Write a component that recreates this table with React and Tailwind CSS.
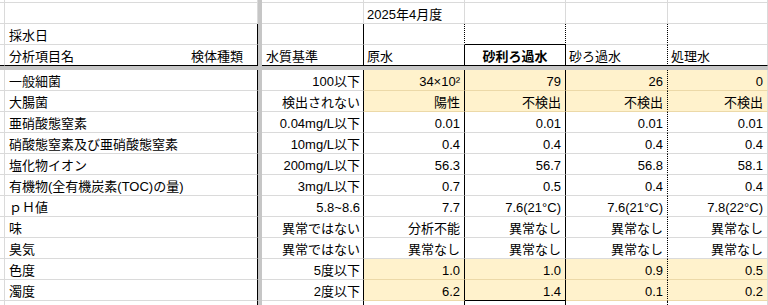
const R = {
  gray: 'border-r border-r-[#dadada]',
  black: 'border-r border-r-black',
  dot: 'border-r border-r-black [border-right-style:dotted]',
  none: '',
};
const B = {
  gray: 'border-b border-b-[#dadada]',
  black: 'border-b border-b-black',
  tan: 'border-b border-b-[#ecd9a8]',
  none: '',
};

// column widths (incl. right border): gutter, item, freeze bar, 基準, 原水, 砂利, 砂, 処理
const W = ['w-[5px]', 'w-[253px]', 'w-[4px]', 'w-[102px]', 'w-[101px]', 'w-[101px]', 'w-[102px]', 'w-[100px]'];

const BODY = [
  { name: '一般細菌', std: '100以下', v: ['34×10²', '79', '26', '0'], hl: true },
  { name: '大腸菌', std: '検出されない', v: ['陽性', '不検出', '不検出', '不検出'], hl: true },
  { name: '亜硝酸態窒素', std: '0.04mg/L以下', v: ['0.01', '0.01', '0.01', '0.01'] },
  { name: '硝酸態窒素及び亜硝酸態窒素', std: '10mg/L以下', v: ['0.4', '0.4', '0.4', '0.4'] },
  { name: '塩化物イオン', std: '200mg/L以下', v: ['56.3', '56.7', '56.8', '58.1'] },
  { name: '有機物(全有機炭素(TOC)の量)', std: '3mg/L以下', v: ['0.7', '0.5', '0.4', '0.4'] },
  { name: 'ｐＨ値', std: '5.8~8.6', v: ['7.7', '7.6(21°C)', '7.6(21°C)', '7.8(22°C)'] },
  { name: '味', std: '異常ではない', v: ['分析不能', '異常なし', '異常なし', '異常なし'] },
  { name: '臭気', std: '異常ではない', v: ['異常なし', '異常なし', '異常なし', '異常なし'] },
  { name: '色度', std: '5度以下', v: ['1.0', '1.0', '0.9', '0.5'], hl: true },
  { name: '濁度', std: '2度以下', v: ['6.2', '1.4', '0.1', '0.2'], hl: true },
];

function Cell({ w, r = 'gray', b = 'gray', className = '', children }) {
  return (
    <div className={`${w} h-full shrink-0 box-border flex items-end overflow-hidden whitespace-nowrap ${R[r]} ${B[b]} ${className}`}>
      {children}
    </div>
  );
}

function Bar() {
  return <div className="w-[4px] h-full shrink-0 bg-[#c6c6c6]" />;
}

export default function App() {
  return (
    <div className="w-[768px] h-[305px] overflow-hidden bg-white text-black text-[13px] leading-none font-['Liberation_Sans','Noto_Sans_CJK_JP',sans-serif]">
      {/* top sliver */}
      <div className="flex h-[3px]">
        <Cell w={W[0]} />
        <Cell w={W[1]} />
        <Bar />
        <Cell w={W[3]} />
        <Cell w={W[4]} />
        <Cell w={W[5]} />
        <Cell w={W[6]} />
        <Cell w={W[7]} />
      </div>

      {/* 2025年4月度 */}
      <div className="flex h-[21px]">
        <Cell w={W[0]} />
        <Cell w={W[1]} />
        <Bar />
        <Cell w={W[3]} />
        <Cell w={W[4]} className="pl-[3px] pb-[2px] overflow-visible">2025年4月度</Cell>
        <Cell w={W[5]} />
        <Cell w={W[6]} />
        <Cell w={W[7]} />
      </div>

      {/* 採水日 */}
      <div className="flex h-[21px]">
        <Cell w={W[0]} />
        <Cell w={W[1]} r="black" className="pl-[4px] pb-[2px]">採水日</Cell>
        <Bar />
        <Cell w={W[3]} r="black" />
        <Cell w={W[4]} r="dot" />
        <Cell w={W[5]} r="dot" b="black" />
        <Cell w={W[6]} r="dot" />
        <Cell w={W[7]} />
      </div>

      {/* 分析項目名 */}
      <div className="flex h-[21px]">
        <Cell w={W[0]} b="black" />
        <Cell w={W[1]} r="black" b="black" className="justify-between pl-[4px] pr-[14px] pb-[2px]">
          <span>分析項目名</span>
          <span>検体種類</span>
        </Cell>
        <Bar />
        <Cell w={W[3]} r="black" b="black" className="pl-[4px] pb-[2px]">水質基準</Cell>
        <Cell w={W[4]} r="black" b="black" className="pl-[3px] pb-[2px]">原水</Cell>
        <Cell w={W[5]} r="black" b="black" className="justify-center pb-[2px] font-bold">砂利ろ過水</Cell>
        <Cell w={W[6]} r="dot" b="black" className="pl-[3px] pb-[2px]">砂ろ過水</Cell>
        <Cell w={W[7]} b="black" className="pl-[3px] pb-[2px]">処理水</Cell>
      </div>

      {/* frozen pane divider */}
      <div className="h-[4px] bg-[#c6c6c6]" />

      {BODY.map((row, i) => {
        const last = i === BODY.length - 1;
        const bg = row.hl ? 'bg-[#fff2cc]' : '';
        const vb = row.hl ? 'tan' : 'gray';
        return (
          <div key={row.name} className="flex h-[21px]">
            <Cell w={W[0]} />
            <Cell w={W[1]} r="black" className="pl-[4px] pb-[2px]">{row.name}</Cell>
            <Bar />
            <Cell w={W[3]} r="black" className="justify-end pr-[3px] pb-[2px]">{row.std}</Cell>
            <Cell w={W[4]} r="black" b={vb} className={`justify-end pr-[4px] pb-[2px] ${bg}`}>{row.v[0]}</Cell>
            <Cell w={W[5]} r="black" b={last ? 'black' : vb} className={`justify-end pr-[4px] pb-[2px] ${bg}`}>{row.v[1]}</Cell>
            <Cell w={W[6]} r="dot" b={vb} className={`justify-end pr-[4px] pb-[2px] ${bg}`}>{row.v[2]}</Cell>
            <Cell w={W[7]} b={vb} className={`justify-end pr-[4px] pb-[2px] ${bg}`}>{row.v[3]}</Cell>
          </div>
        );
      })}

      {/* partial row at the bottom */}
      <div className="flex h-[4px]">
        <Cell w={W[0]} b="none" />
        <Cell w={W[1]} r="black" b="none" />
        <Bar />
        <Cell w={W[3]} r="black" b="none" />
        <Cell w={W[4]} r="black" b="none" />
        <Cell w={W[5]} r="black" b="none" />
        <Cell w={W[6]} r="dot" b="none" />
        <Cell w={W[7]} b="none" />
      </div>
    </div>
  );
}
